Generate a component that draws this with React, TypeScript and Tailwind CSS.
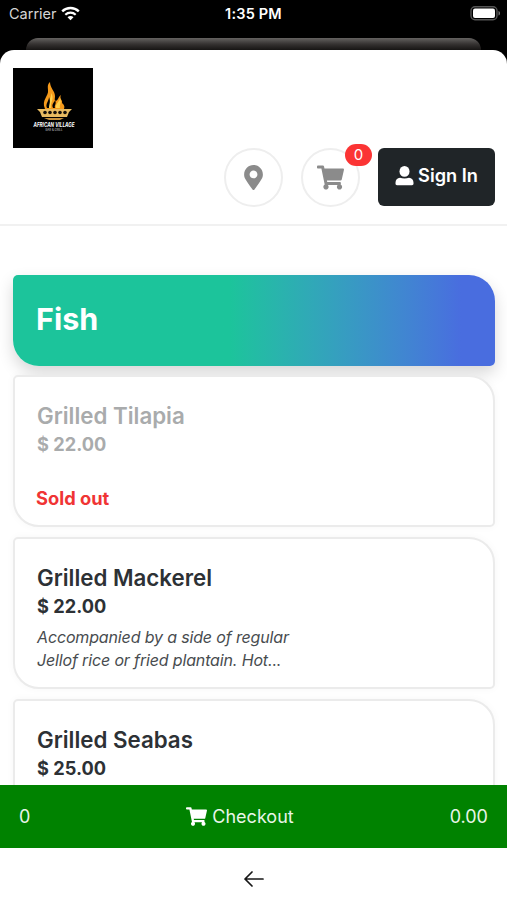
import { FaMapMarkerAlt, FaShoppingCart } from "react-icons/fa";

type Dish = {
  name: string;
  price: string;
  description?: string[];
  soldOut?: boolean;
};

const dishes: Dish[] = [
  { name: "Grilled Tilapia", price: "$ 22.00", soldOut: true },
  {
    name: "Grilled Mackerel",
    price: "$ 22.00",
    description: ["Accompanied by a side of regular", "Jellof rice or fried plantain. Hot..."],
  },
  { name: "Grilled Seabas", price: "$ 25.00" },
];

function StatusBar() {
  return (
    <div className="grid h-[38px] shrink-0 grid-cols-3 items-start text-white">
      <div className="flex items-center gap-[5px] pl-[9px] pt-[4px]">
        <span className="text-[14.5px] leading-5 text-[#d5d5d5]">Carrier</span>
        <svg width="19" height="15" viewBox="0 0 19 15" fill="none" stroke="white" className="relative -left-px -top-px">
          <path d="M1.2 5.4C5.9.9 13.1.9 17.8 5.4" strokeWidth="2.4" />
          <path d="M4.3 8.7C7.3 5.9 11.7 5.9 14.7 8.7" strokeWidth="2.2" />
          <path d="M6.5 11.2C8.2 9.7 10.8 9.7 12.5 11.2L9.5 14.2Z" fill="white" stroke="none" />
        </svg>
      </div>
      <p className="pt-[4px] text-center text-[14.5px] font-semibold leading-5 tracking-[0.2px]">1:35 PM</p>
      <div className="flex justify-end pr-[6px] pt-[6px]">
        <svg width="31" height="15" viewBox="0 0 31 15">
          <rect x="1" y=".8" width="26" height="13" rx="4" fill="none" stroke="#555" strokeWidth="1.4" />
          <rect x="3" y="2.6" width="22" height="9.4" rx="2" fill="white" />
          <path d="M28.5 5c2 .6 2 4 0 4.6z" fill="#777" />
        </svg>
      </div>
    </div>
  );
}

function Logo() {
  return (
    <svg className="block h-[80px] w-[80px]" viewBox="0 0 80 80">
      <rect width="80" height="80" fill="#000" />
      <path
        d="M32 41C28 32 36 28 35 22C35 19 34 17 37 14C37 20 42 23 42 28C42 31 41 32 43 33C46 31 45 29 48 27C46 31 50 32 49 35C51 37 52 38 51 41Z"
        fill="#f59a1b"
      />
      <path d="M36 40C33 34 39 31 38 25C42 31 37 34 38 40ZM43 40C42 35 47 34 47 30C49 35 46 37 47 40Z" fill="#ffd34e" />
      <path d="M34 40C32 36 36 33 36 29C38 34 36 36 36 40ZM40 40C38 36 42 34 42 32C44 36 41 37 42 40Z" fill="#000" />
      <path d="M24 41H59L56 44L54 49H29L27 44Z" fill="#e8bb61" />
      <path d="M31 50H51L47 52H36Z" fill="#c7913c" />
      <g fill="#16100a">
        <circle cx="32" cy="44.5" r="1.8" />
        <circle cx="37" cy="44.5" r="1.8" />
        <circle cx="42" cy="44.5" r="1.8" />
        <circle cx="47" cy="44.5" r="1.8" />
        <circle cx="52" cy="44.5" r="1.8" />
      </g>
      <text
        x="41"
        y="58.5"
        textAnchor="middle"
        textLength="41"
        lengthAdjust="spacingAndGlyphs"
        className="fill-white text-[5.5px] font-bold italic"
      >
        AFRICAN VILLAGE
      </text>
      <text
        x="41"
        y="63"
        textAnchor="middle"
        textLength="17"
        lengthAdjust="spacingAndGlyphs"
        className="fill-[#bbb] text-[3px] font-medium"
      >
        BAR & GRILL
      </text>
    </svg>
  );
}

function Header() {
  return (
    <header className="h-[176px] shrink-0 border-b-2 border-[#f1f1f1] pl-[13px] pr-[12px] pt-[18px]">
      <Logo />
      <div className="flex justify-end">
        <button className="mr-[18px] flex size-[59px] items-center justify-center rounded-full border-2 border-[#eee]">
          <FaMapMarkerAlt className="h-[25px] w-[19px] text-[#8b8b8b]" />
        </button>
        <button className="relative mr-[18px] flex size-[59px] items-center justify-center rounded-full border-2 border-[#eee]">
          <FaShoppingCart className="h-[25px] w-[27px] text-[#8b8b8b]" />
          <span className="absolute -top-[6px] left-[42px] flex h-[22px] w-[27px] items-center justify-center rounded-full bg-[#fb3434] text-[15px] text-white">
            0
          </span>
        </button>
        <button className="flex h-[58px] w-[117px] items-center justify-center gap-[4px] rounded-[6px] bg-[#202528] pb-[2px] text-[18.2px] font-semibold text-white">
          <svg width="19" height="20" viewBox="0 0 19 20" fill="currentColor">
            <ellipse cx="9.5" cy="5.4" rx="5" ry="5.4" />
            <path d="M5 11.8C6.2 12.2 7.8 12.6 9.5 12.6S12.8 12.2 14 11.8C16.8 12 18.5 14 18.5 16.8V17.8C18.5 18.7 17.9 19.2 17 19.2H2C1.1 19.2.5 18.7.5 17.8V16.8C.5 14 2.2 12 5 11.8Z" />
          </svg>
          Sign In
        </button>
      </div>
    </header>
  );
}

function DishCard({ dish }: { dish: Dish }) {
  return (
    <article className="h-[152px] shrink-0 rounded-[5px_26px_5px_26px] border-2 border-[#ebebeb] bg-white px-[22px] pt-[23px] text-[#2d3135] shadow-[0_0_8px_rgba(0,0,0,0.035)]">
      <div className={dish.soldOut ? "text-[#a9abac]" : ""}>
        <h3 className="text-[22.3px] font-semibold leading-[31px]">{dish.name}</h3>
        <p className="text-[18.2px] font-bold leading-[26px]">{dish.price}</p>
      </div>
      {dish.soldOut && <p className="-ml-px mt-[28px] text-[18.3px] font-bold leading-[26px] text-[#f03434]">Sold out</p>}
      {dish.description && (
        <p className="mt-[7px] text-[16px] italic leading-[23px] tracking-[-0.15px] text-[#484c4f]">
          {dish.description.map((line) => (
            <span className="block" key={line}>
              {line}
            </span>
          ))}
        </p>
      )}
    </article>
  );
}

export default function App() {
  return (
    <div className="flex h-[900px] w-[507px] flex-col overflow-hidden bg-black font-['Inter',sans-serif]">
      <StatusBar />
      <div className="mx-[26px] h-[12px] shrink-0 rounded-t-[12px] bg-linear-to-b from-[#656361] via-[#363332] to-[#171514]" />
      <div className="flex min-h-0 flex-1 flex-col rounded-t-[14px] bg-white">
        <Header />
        <main className="flex min-h-0 flex-1 flex-col gap-[10px] overflow-hidden pl-[13px] pr-[12px] pt-[49px]">
          <div className="-mb-px flex h-[91px] shrink-0 items-center rounded-[5px_26px_5px_26px] bg-linear-to-r from-[#1cc49b] from-45% to-[#496ddf] to-93% pb-[3px] pl-[23px] shadow-[0_7px_16px_rgba(0,0,0,0.16)]">
            <h2 className="text-[30.5px] font-bold text-white">Fish</h2>
          </div>
          {dishes.map((dish) => (
            <DishCard dish={dish} key={dish.name} />
          ))}
        </main>
        <button className="flex h-[63px] shrink-0 items-center justify-between bg-[#008200] px-[19px] pb-px text-[18px] text-[#e9f5e9]">
          <span>0</span>
          <span className="flex items-center gap-[5px]">
            <FaShoppingCart className="h-[19px] w-[21px] text-white" />
            Checkout
          </span>
          <span>0.00</span>
        </button>
        <nav className="flex h-[52px] shrink-0 items-center justify-center pt-[10px]">
          <svg width="20" height="16" viewBox="0 0 20 16" fill="none" stroke="#171717" strokeWidth="1.7" strokeLinecap="round" strokeLinejoin="round">
            <path d="M19 8H1M8 1L1 8L8 15" />
          </svg>
        </nav>
      </div>
    </div>
  );
}
